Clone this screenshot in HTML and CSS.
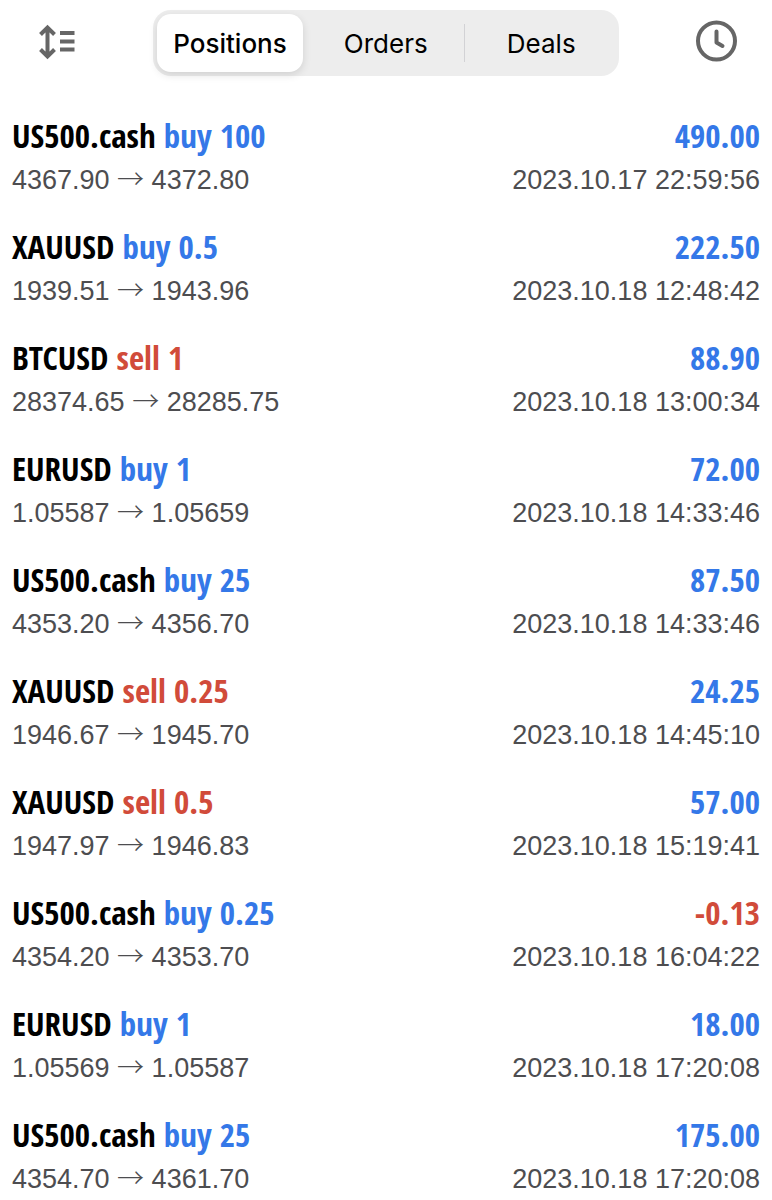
FILE: index.html
```
<!DOCTYPE html>
<html lang="en">
<head>
    <meta charset="UTF-8">
    <meta name="viewport" content="width=device-width, initial-scale=1.0">
    <title>History - Positions</title>
    <link rel="stylesheet" href="styles.css">
</head>
<body>
    <header class="toolbar">
        <button class="icon-button" type="button" aria-label="Sort">
            <svg width="44" height="44" viewBox="0 0 44 44" fill="none" stroke="#666" stroke-width="4">
                <path d="M13.500 8V38M6.500 15.500L13.500 8.500L20.500 15.500M6.500 30.500L13.500 37.500L20.500 30.500"/>
                <path d="M26 14H40.500M26 22.500H40.500M26 30.500H40.500"/>
            </svg>
        </button>
        <nav class="tabs">
            <button class="tab active" type="button">Positions</button>
            <button class="tab" type="button">Orders</button>
            <button class="tab" type="button">Deals</button>
        </nav>
        <button class="icon-button" type="button" aria-label="Period">
            <svg width="44" height="44" viewBox="0 0 44 44" fill="none" stroke="#666" stroke-width="4">
                <circle cx="22.500" cy="22" r="18.500"/>
                <path d="M22.500 12.500V23.500L28.500 27" stroke-linecap="round" stroke-linejoin="round"/>
            </svg>
        </button>
    </header>

    <ul class="positions">
        <li class="position">
            <div class="line main"><span>US500.cash <span class="blue">buy 100</span></span><span class="blue">490.00</span></div>
            <div class="line detail"><span>4367.90 <span class="arrow">→</span> 4372.80</span><time>2023.10.17 22:59:56</time></div>
        </li>
        <li class="position">
            <div class="line main"><span>XAUUSD <span class="blue">buy 0.5</span></span><span class="blue">222.50</span></div>
            <div class="line detail"><span>1939.51 <span class="arrow">→</span> 1943.96</span><time>2023.10.18 12:48:42</time></div>
        </li>
        <li class="position">
            <div class="line main"><span>BTCUSD <span class="red">sell 1</span></span><span class="blue">88.90</span></div>
            <div class="line detail"><span>28374.65 <span class="arrow">→</span> 28285.75</span><time>2023.10.18 13:00:34</time></div>
        </li>
        <li class="position">
            <div class="line main"><span>EURUSD <span class="blue">buy 1</span></span><span class="blue">72.00</span></div>
            <div class="line detail"><span>1.05587 <span class="arrow">→</span> 1.05659</span><time>2023.10.18 14:33:46</time></div>
        </li>
        <li class="position">
            <div class="line main"><span>US500.cash <span class="blue">buy 25</span></span><span class="blue">87.50</span></div>
            <div class="line detail"><span>4353.20 <span class="arrow">→</span> 4356.70</span><time>2023.10.18 14:33:46</time></div>
        </li>
        <li class="position">
            <div class="line main"><span>XAUUSD <span class="red">sell 0.25</span></span><span class="blue">24.25</span></div>
            <div class="line detail"><span>1946.67 <span class="arrow">→</span> 1945.70</span><time>2023.10.18 14:45:10</time></div>
        </li>
        <li class="position">
            <div class="line main"><span>XAUUSD <span class="red">sell 0.5</span></span><span class="blue">57.00</span></div>
            <div class="line detail"><span>1947.97 <span class="arrow">→</span> 1946.83</span><time>2023.10.18 15:19:41</time></div>
        </li>
        <li class="position">
            <div class="line main"><span>US500.cash <span class="blue">buy 0.25</span></span><span class="red">-0.13</span></div>
            <div class="line detail"><span>4354.20 <span class="arrow">→</span> 4353.70</span><time>2023.10.18 16:04:22</time></div>
        </li>
        <li class="position">
            <div class="line main"><span>EURUSD <span class="blue">buy 1</span></span><span class="blue">18.00</span></div>
            <div class="line detail"><span>1.05569 <span class="arrow">→</span> 1.05587</span><time>2023.10.18 17:20:08</time></div>
        </li>
        <li class="position">
            <div class="line main"><span>US500.cash <span class="blue">buy 25</span></span><span class="blue">175.00</span></div>
            <div class="line detail"><span>4354.70 <span class="arrow">→</span> 4361.70</span><time>2023.10.18 17:20:08</time></div>
        </li>
    </ul>
</body>
</html>
```
FILE: styles.css
```
* {
    box-sizing: border-box;
}
body {
    margin: 0;
    background-color: white;
    font-family: "Liberation Sans", Arial, sans-serif;
}
.toolbar {
    display: flex;
    align-items: flex-start;
    padding: 10px 34px 0;
}
.icon-button {
    width: 44px;
    height: 44px;
    margin-top: 9px;
    padding: 0;
    border: none;
    background: none;
}
.icon-button svg {
    display: block;
}
.tabs {
    flex: 1;
    display: flex;
    height: 66px;
    margin: 0 75px;
    padding: 4px 0 4px 4px;
    border-radius: 18px;
    background-color: #ededed;
}
.tab {
    flex: 1;
    padding: 0;
    border: none;
    background: none;
    color: black;
    font-family: Inter, sans-serif;
    font-size: 26px;
    font-weight: 400;
}
.tab.active {
    flex: 0 0 146px;
    margin-right: 5px;
    border-radius: 14px;
    background-color: white;
    box-shadow: 0 3px 8px rgba(0, 0, 0, 0.12);
    font-weight: 500;
}
.tab:last-child {
    background: linear-gradient(#d2d2d5, #d2d2d5) no-repeat left center / 1px 38px;
}
.positions {
    margin: 0;
    padding: 38px 12px 0;
    list-style: none;
}
.position {
    height: 111px;
}
.line {
    display: flex;
    justify-content: space-between;
    white-space: nowrap;
}
.main {
    font-family: "Open Sans Condensed", "Roboto Condensed", sans-serif;
    font-size: 33px;
    font-weight: bold;
    line-height: 44px;
}
.detail {
    color: #4d4d50;
    font-size: 27px;
    line-height: 44px;
}
.arrow {
    font-family: "Noto Sans CJK SC", sans-serif;
    font-weight: 300;
    line-height: 1;
}
.blue {
    color: #3478e8;
}
.red {
    color: #d14b3a;
}
```
